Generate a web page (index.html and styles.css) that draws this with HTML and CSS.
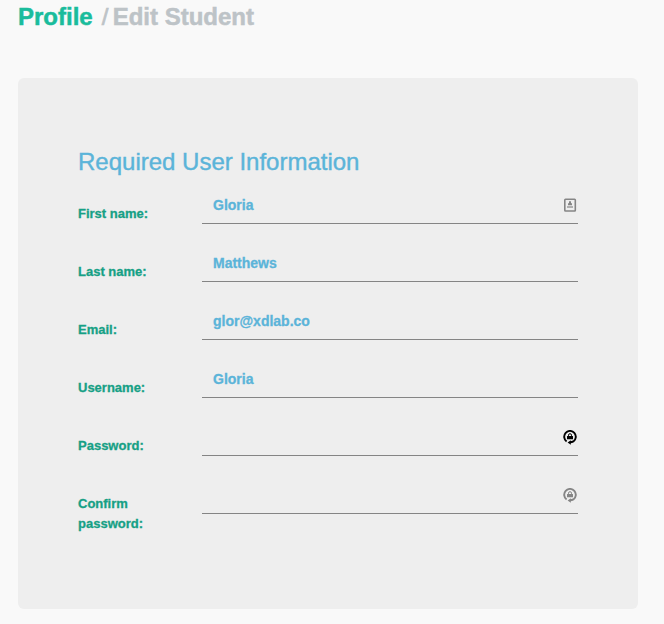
FILE: index.html
```html
<!DOCTYPE html>
<html lang="en">
<head>
<meta charset="utf-8">
<title>Edit Student</title>
<link rel="stylesheet" href="styles.css">
</head>
<body>
<svg class="symbols" aria-hidden="true">
  <symbol id="contact" viewBox="0 0 14 14">
    <rect x="1.8" y="1.2" width="10.5" height="11.8" rx=".7" fill="none" stroke="currentColor" stroke-width="1.6"/>
    <path fill="currentColor" d="M6 3.2h2v2H6zM5 5.2h4v2H5z"/>
    <path fill="currentColor" opacity=".6" d="M4 8h6v2H4z"/>
  </symbol>
  <symbol id="lock" viewBox="0 0 14 15">
    <path fill="none" stroke="currentColor" stroke-width="1.9" d="M3.6 11.4A5.8 5.8 0 1 1 10.4 11.4Q9 12.2 7 12.3"/>
    <path fill="currentColor" d="M4.6 12.4L7.8 10.2v4.6z"/>
    <rect x="4" y="5.9" width="6" height="3.4" rx=".3" fill="currentColor"/>
    <path fill="none" stroke="currentColor" stroke-width="1" d="M5.5 6V5.2a1.5 1.5 0 0 1 3 0V6"/>
  </symbol>
</svg>
<h1 class="breadcrumb"><span class="section">Profile</span><span class="slash">/</span><span>Edit Student</span></h1>
<form class="card">
  <h2 class="heading">Required User Information</h2>
  <div class="row"><label class="label">First name:</label><div class="field"><span>Gloria</span><svg class="icon contact"><use href="#contact"/></svg></div></div>
  <div class="row"><label class="label">Last name:</label><div class="field"><span>Matthews</span></div></div>
  <div class="row"><label class="label">Email:</label><div class="field"><span>glor@xdlab.co</span></div></div>
  <div class="row"><label class="label">Username:</label><div class="field"><span>Gloria</span></div></div>
  <div class="row"><label class="label">Password:</label><div class="field"><svg class="icon active"><use href="#lock"/></svg></div></div>
  <div class="row"><label class="label">Confirm password:</label><div class="field"><svg class="icon"><use href="#lock"/></svg></div></div>
</form>
</body>
</html>
```
FILE: styles.css
```css
* { box-sizing: border-box; }
body {
  margin: 0;
  padding: 0 26px 15px 18px;
  background: #f9f9f9;
  font-family: "Liberation Sans", Arial, sans-serif;
}
.symbols { display: none; }
.breadcrumb {
  display: flex;
  height: 78px;
  margin: 0;
  padding-top: 3px;
  font-size: 24px;
  line-height: 28px;
  color: #bdc3c7;
  -webkit-text-stroke: .5px currentColor;
}
.section { color: #1abc9c; }
.slash { width: 11px; margin-left: 9px; font-weight: 400; -webkit-text-stroke-width: .7px; }
.card {
  height: 531px;
  padding: 68px 60px 0;
  border-radius: 6px;
  background: #eee;
}
.heading {
  height: 44px;
  margin: 0;
  font-size: 24px;
  font-weight: 400;
  line-height: 32px;
  color: #5bb4d9;
  -webkit-text-stroke: .4px currentColor;
}
.row {
  display: grid;
  grid-template-columns: 94px 376px;
  column-gap: 30px;
  height: 58px;
}
.label {
  padding-top: 14px;
  font-size: 13px;
  font-weight: 700;
  line-height: 20px;
  color: #16a085;
  -webkit-text-stroke: .3px currentColor;
}
.field {
  display: flex;
  align-items: center;
  height: 34px;
  padding: 0 0 3px 11px;
  border-bottom: 1px solid #848484;
  font-size: 14px;
  font-weight: 700;
  color: #5bb4d9;
  -webkit-text-stroke: .3px currentColor;
}
.icon {
  width: 14px;
  height: 15px;
  margin: 0 1px 0 auto;
  color: #858585;
}
.contact { height: 14px; }
.active { color: #000; }
```
